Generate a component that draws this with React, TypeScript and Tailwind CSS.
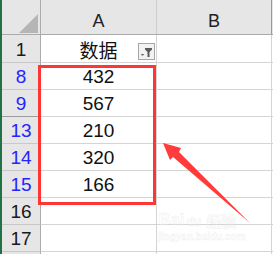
import React from "react";

type Row = { n: string; v: string; blue?: boolean; head?: boolean; h: string; thick?: boolean };

const rows: Row[] = [
  { n: "1", v: "数据", head: true, h: "h-[28px]" },
  { n: "8", v: "432", blue: true, h: "h-[27px]" },
  { n: "9", v: "567", blue: true, h: "h-[27px]", thick: true },
  { n: "13", v: "210", blue: true, h: "h-[27px]" },
  { n: "14", v: "320", blue: true, h: "h-[27px]" },
  { n: "15", v: "166", blue: true, h: "h-[27px]" },
  { n: "16", v: "", h: "h-[27px]" },
  { n: "17", v: "", h: "h-[27px]" },
  { n: "", v: "", h: "h-[27px]" },
];

function FilterButton() {
  return (
    <div className="absolute right-[1px] top-[8px] w-[17px] h-[17px] border border-[#a6a6a6] bg-[#f2f2f2] flex items-center justify-center">
      <svg width="15" height="15" viewBox="0 0 15 15">
        <rect x="2" y="10" width="3" height="1" fill="#7a7a7a" />
        <path d="M3.5 12 L2.5 11 L4.5 11 Z" fill="#7a7a7a" />
        <path d="M6 4 H13 V5.5 L10.5 8 V13 H8.5 V8 L6 5.5 Z" fill="#5a5a5a" />
      </svg>
    </div>
  );
}

export default function App() {
  return (
    <div className="relative w-[273px] h-[254px] overflow-hidden bg-white flex font-['Liberation_Sans',Arial,sans-serif]">
      <div className="w-[2px] h-full shrink-0 bg-[#217346]" />
      <div className="flex flex-col flex-1">
        {/* column headers */}
        <div className="flex shrink-0 h-[35px] bg-[#e6e6e6] border-b border-[#ababab]">
          <div className="w-[39px] border-r border-[#ababab] relative">
            <svg className="absolute left-[17px] top-[14px]" width="20" height="19" viewBox="0 0 20 19">
              <path d="M19 0 V19 H0 Z" fill="#b5b5b5" />
            </svg>
          </div>
          <div className="w-[116px] border-r border-[#cfcfcf] flex items-end justify-center pb-[4px] text-[18px] leading-none text-[#222]">
            A
          </div>
          <div className="w-[115px] border-r border-[#9a9a9a] flex items-end justify-center pb-[4px] text-[18px] leading-none text-[#222]">
            B
          </div>
          <div className="flex-1" />
        </div>
        {rows.map((r, i) => (
          <div key={i} className={`flex shrink-0 ${r.h}`}>
            <div
              className={`w-[39px] bg-[#e6e6e6] border-r border-[#ababab] border-b ${
                r.thick ? "border-b-[#9c9c9c]" : "border-b-[#c8c8c8]"
              } flex items-center justify-center pt-[1px] text-[19px] leading-none ${
                r.blue ? "text-[#2424ff]" : "text-[#1a1a1a]"
              }`}
            >
              {r.n}
            </div>
            <div
              className={`relative w-[116px] border-r border-b border-[#d4d4d4] flex items-center justify-center pt-[1px] leading-none text-[#111] ${
                r.head ? "text-[19px] font-['Noto_Sans_CJK_SC',sans-serif]" : "text-[19px]"
              }`}
            >
              {r.v}
              {r.head && <FilterButton />}
            </div>
            <div className="w-[115px] border-r border-b border-[#d4d4d4]" />
            <div className="flex-1 border-b border-[#d4d4d4]" />
          </div>
        ))}
      </div>

      {/* highlight box around the filtered values */}
      <div className="absolute left-[38px] top-[65px] w-[118px] h-[140px] border-[3px] border-[#ff3636] pointer-events-none" />

      {/* pointer arrow */}
      <svg className="absolute left-0 top-0 pointer-events-none" width="273" height="254" viewBox="0 0 273 254">
        <polygon points="163,143 181,148 179,152 250,223 173,157 170,160" fill="#ff3b3b" />
      </svg>

      {/* faint site mark */}
      <div className="absolute left-[158px] top-[211px] pointer-events-none select-none flex flex-col items-start opacity-40">
        <div className="flex items-end gap-[2px] text-[17px] font-bold leading-none text-white [-webkit-text-stroke:0.5px_#d6d6d6] font-['Liberation_Sans',sans-serif]">
          <span>Bai</span>
          <span className="text-[12px]">du</span>
          <span className="ml-[3px] text-[15px] font-['Noto_Sans_CJK_SC',sans-serif]">经验</span>
        </div>
        <div className="mt-[4px] text-[10px] font-bold leading-none text-white [-webkit-text-stroke:0.4px_#d6d6d6]">
          jingyan.baidu.com
        </div>
      </div>
    </div>
  );
}
